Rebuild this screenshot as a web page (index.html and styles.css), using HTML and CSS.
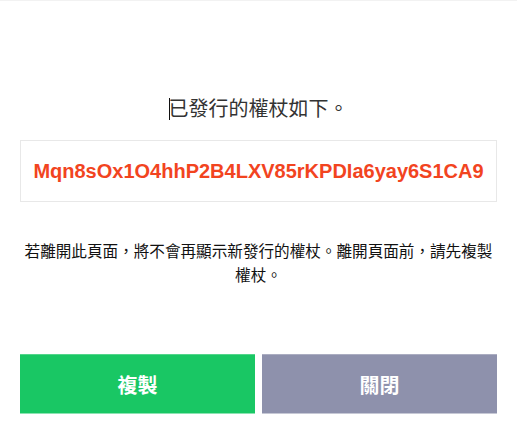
FILE: index.html
```html
<!DOCTYPE html>
<html lang="zh-Hant">
<head>
<meta charset="utf-8">
<link rel="stylesheet" href="styles.css">
</head>
<body>
<div class="page">
  <h1 class="title"><span class="caret"></span>已發行的權杖如下。</h1>
  <div class="token-box">
    <span class="token">Mqn8sOx1O4hhP2B4LXV85rKPDIa6yay6S1CA9</span>
  </div>
  <p class="notice">若離開此頁面，將不會再顯示新發行的權杖。離開頁面前，請先複製權杖。</p>
  <div class="actions">
    <button class="btn btn-copy">複製</button>
    <button class="btn btn-close">關閉</button>
  </div>
</div>
</body>
</html>
```
FILE: styles.css
```css
html, body {
  margin: 0;
  padding: 0;
  background: #fff;
}
body {
  font-family: "Noto Sans CJK TC", "Noto Sans", sans-serif;
  color: #222;
  border-top: 1px solid #f2f2f2;
}
.page {
  display: flex;
  flex-direction: column;
  padding: 93px 20px 0;
}
.title {
  margin: 0;
  font-size: 20px;
  font-weight: normal;
  line-height: 28px;
  text-align: center;
  color: #333;
}
.caret {
  display: inline-block;
  width: 1px;
  height: 22px;
  background: #111;
  vertical-align: -4px;
  margin-right: -1px;
}
.token-box {
  margin-top: 18px;
  height: 62px;
  box-sizing: border-box;
  border: 1px solid #e8e8e8;
  display: flex;
  align-items: center;
  justify-content: center;
}
.token {
  font-family: "Liberation Sans", Arial, sans-serif;
  font-weight: bold;
  font-size: 20px;
  color: #f2441f;
}
.notice {
  margin: 36px 0 0;
  font-size: 15.6px;
  line-height: 24px;
  text-align: center;
  color: #111;
}
.actions {
  margin-top: 68px;
  display: grid;
  grid-template-columns: 1fr 1fr;
  gap: 7px;
}
.btn {
  height: 60px;
  border: none;
  border-top: 1px solid rgba(255,255,255,0.25);
  border-bottom: 1px solid rgba(255,255,255,0.5);
  font-family: "Noto Sans CJK TC", "Noto Sans", sans-serif;
  font-size: 20px;
  font-weight: bold;
  color: #fff;
  padding: 0;
}
.btn-copy {
  background: #19c764;
}
.btn-close {
  background: #8e91ac;
}
```
